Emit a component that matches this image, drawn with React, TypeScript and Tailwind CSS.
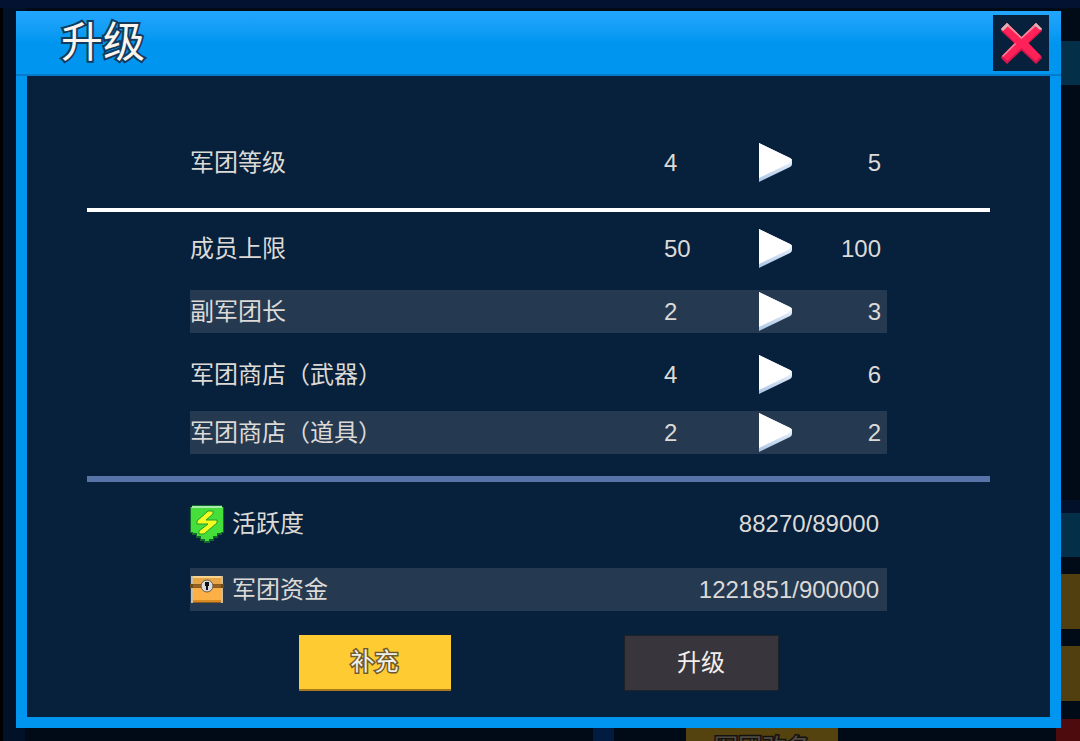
import type { ReactNode } from "react";

interface Stat {
  label: string;
  current: number;
  next: number;
}

const level: Stat = { label: "军团等级", current: 4, next: 5 };

const stats: Stat[] = [
  { label: "成员上限", current: 50, next: 100 },
  { label: "副军团长", current: 2, next: 3 },
  { label: "军团商店（武器）", current: 4, next: 6 },
  { label: "军团商店（道具）", current: 2, next: 2 },
];

function ArrowIcon() {
  return (
    <svg width="35" height="40" viewBox="0 0 35 40" aria-hidden="true">
      <defs>
        <linearGradient id="arrow-edge" x1="0" y1="0" x2="0" y2="1">
          <stop offset="0.5" stopColor="#e3edf9" />
          <stop offset="1" stopColor="#a9c3e4" />
        </linearGradient>
      </defs>
      <path d="M1 0 L32 15 Q34 16 34 18 V21 Q34 23 32 24 L1 39 Z" fill="url(#arrow-edge)" />
      <path d="M1 0 L32 15 Q34 16 34 17 L30 21 L1 35 Z" fill="#ffffff" />
    </svg>
  );
}

function CloseIcon() {
  return (
    <svg width="41" height="42" viewBox="0 0 41 42" aria-hidden="true">
      <path
        d="M6 1 L20.500 15 L35 1 L41 7 V9 L27.500 21.500 L41 35 V36 L35 42 L20.500 28.500 L6 42 L0 36 V35 L13.500 21.500 L0 9 V7 Z"
        fill="#d3174c"
      />
      <path
        d="M6 1 L20.500 15 L35 1 L41 7 L27 20.500 L40 34 L34.500 39 L20.500 26 L6.500 39 L1 34 L14 20.500 L0 7 Z"
        fill="#ff2158"
      />
      <path
        d="M0 7 L6 1 L20.500 15 L35 1 L41 7 L39.500 8 L35 4 L20.500 17 L6 4 L1.500 8 Z"
        fill="#ec8d9c"
      />
      <path d="M1 34 L14 21 L15 22 L2 35 Z" fill="#ec8d9c" />
      <path d="M0 7 L6 1 L8 3 L2 9 Z M33 3 L35 1 L41 7 L39 8 Z" fill="#d9b3b6" />
    </svg>
  );
}

function ActivityIcon() {
  return (
    <svg width="34" height="38" viewBox="0 0 34 38" aria-hidden="true">
      <path
        d="M2 0 H32 V2 H34 V28 H32 V30 H28 V33 H24 V36 H20 V38 H14 V36 H10 V33 H6 V30 H2 V28 H0 V2 H2 Z"
        fill="#12692b"
      />
      <path
        d="M2 1 H32 V2 H33 V27 H31 V28 H27 V31 H23 V34 H19 V36 H15 V34 H11 V31 H7 V28 H3 V27 H1 V2 H2 Z"
        fill="#45de3a"
      />
      <path d="M2 1 H32 V3 H2 Z" fill="#a9ecae" />
      <path
        d="M18 6 H23 V9 L16 15 H27 V18 L14 29 H9 V26 L18 19 H7 V16 Z"
        fill="#f2fb22"
        stroke="#259a2c"
        strokeWidth="1"
      />
    </svg>
  );
}

function ChestIcon() {
  return (
    <svg width="34" height="29" viewBox="0 0 34 29" aria-hidden="true">
      <path d="M1 1 H33 V28 H1 Z" fill="#8a5c22" />
      <path d="M3 1 H31 V9 H3 Z" fill="#e9a748" />
      <path d="M3 1 H31 V3 H3 Z" fill="#fbd58e" />
      <path d="M3 13 H31 V27 H3 Z" fill="#fcb045" />
      <path d="M3 25 H31 V27 H3 Z" fill="#d98a22" />
      <path d="M0 10 H34 V12 H0 Z" fill="#9a6020" />
      <path d="M1 1 H3 V28 H1 Z M31 1 H33 V28 H31 Z" fill="#cdbf9e" />
      <path d="M0 9 H3 V13 H0 Z M31 9 H34 V13 H31 Z" fill="#6b4a1c" />
      <circle cx="17" cy="11" r="6" fill="#d9dade" stroke="#6b5a45" />
      <path d="M15 7 H19 V11 H18 V15 H16 V11 H15 Z" fill="#121212" />
    </svg>
  );
}

function StatRow({ stat, className }: { stat: Stat; className: string }) {
  return (
    <tr className={`flex h-[43px] items-center ${className}`}>
      <th scope="row" className="flex-1 text-left font-normal">
        {stat.label}
      </th>
      <td className="w-[94px]">{stat.current}</td>
      <td className="w-[35px]">
        <ArrowIcon />
      </td>
      <td className="w-[94px] pr-[6px] text-right">{stat.next}</td>
    </tr>
  );
}

interface CostRowProps {
  icon: ReactNode;
  label: string;
  value: string;
  className: string;
}

function CostRow({ icon, label, value, className }: CostRowProps) {
  return (
    <div className={`mx-[103px] flex h-[43px] items-center gap-2 ${className}`}>
      {icon}
      <dt className="flex-1">{label}</dt>
      <dd className="pr-2">{value}</dd>
    </div>
  );
}

// Dimmed legion screen that stays behind the dialog
function Backdrop() {
  return (
    <div className="absolute inset-0 flex flex-col bg-[#010a17]">
      <div className="h-2 bg-[#021230]" />
      <div className="flex flex-1 justify-between">
        <div className="w-[25px] border-l-[3px] border-black bg-[#011228]" />
        <div className="flex w-6 flex-col">
          <div className="mt-[33px] h-11 bg-[#032f48]" />
          <div className="mt-[415px] h-[13px] bg-[#02102a]" />
          <div className="h-11 bg-[#032f48]" />
          <div className="mt-[17px] h-[55px] bg-[#513f10]" />
          <div className="mt-[17px] h-[55px] bg-[#513f10]" />
          <div className="mt-[18px] flex-1 bg-[#4d0b0e]" />
        </div>
      </div>
      <div className="absolute inset-x-0 bottom-0 flex h-[13px] items-start overflow-hidden pl-[593px]">
        <div className="h-full w-[21px] bg-[#021b40]" />
        <button
          tabIndex={-1}
          className="ml-[72px] w-[152px] bg-[#54420f] pt-1 text-2xl leading-8 text-[#4f4a40] [-webkit-text-stroke:3px_#141210] [paint-order:stroke_fill]"
        >
          军团改名
        </button>
      </div>
    </div>
  );
}

export default function App() {
  return (
    <div className="relative min-h-screen overflow-hidden pt-[11px] pr-[19px] pb-[13px] pl-4 font-['Liberation_Sans','Noto_Sans_CJK_SC',sans-serif] text-2xl text-[#dcdad7]">
      <Backdrop />

      <div role="dialog" aria-labelledby="dialog-title" className="relative">
        <header className="flex h-[65px] items-center justify-between border-b-2 border-[#087acb] bg-linear-to-b from-[#22a6ff] to-[#0096f0] to-50% pr-3 pl-[45px]">
          <h1
            id="dialog-title"
            className="pt-px text-[42px] leading-none text-[#fbf5ee] [-webkit-text-stroke:4px_#123a5c] [paint-order:stroke_fill]"
          >
            升级
          </h1>
          <button
            aria-label="关闭"
            className="flex size-14 items-center justify-center bg-[#07203b]"
          >
            <CloseIcon />
          </button>
        </header>

        <div className="border-x-[11px] border-b-[11px] border-[#0096f0] bg-[#07203b] px-15 pt-[65px] pb-[26px]">
          <table className="block">
            <tbody className="block">
              <StatRow stat={level} className="mx-[103px]" />
            </tbody>
          </table>
          <hr className="mt-6 h-1 border-0 bg-white" />

          <table className="mx-[103px] mt-[15px] block">
            <tbody className="block">
              <StatRow stat={stats[0]} className="" />
              <StatRow stat={stats[1]} className="mt-5 bg-[#253950]" />
              <StatRow stat={stats[2]} className="mt-5" />
              <StatRow stat={stats[3]} className="mt-[15px] bg-[#253950]" />
            </tbody>
          </table>
          <hr className="mt-[22px] h-[6px] border-0 bg-[#5873a8]" />

          <dl>
            <CostRow
              icon={<ActivityIcon />}
              label="活跃度"
              value="88270/89000"
              className="mt-5"
            />
            <CostRow
              icon={<ChestIcon />}
              label="军团资金"
              value="1221851/900000"
              className="mt-[23px] bg-[#253950]"
            />
          </dl>

          <div className="mt-6 flex justify-center gap-[173px]">
            <button className="h-14 w-[152px] border-b-2 border-[#a87b1e] bg-[#ffcb32] text-[#f1efe9] [-webkit-text-stroke:3px_#6e5a2c] [paint-order:stroke_fill]">
              补充
            </button>
            <button className="h-14 w-[155px] border border-[#1d2229] bg-[#38353d] text-[#f1efe9]">
              升级
            </button>
          </div>
        </div>
      </div>
    </div>
  );
}
